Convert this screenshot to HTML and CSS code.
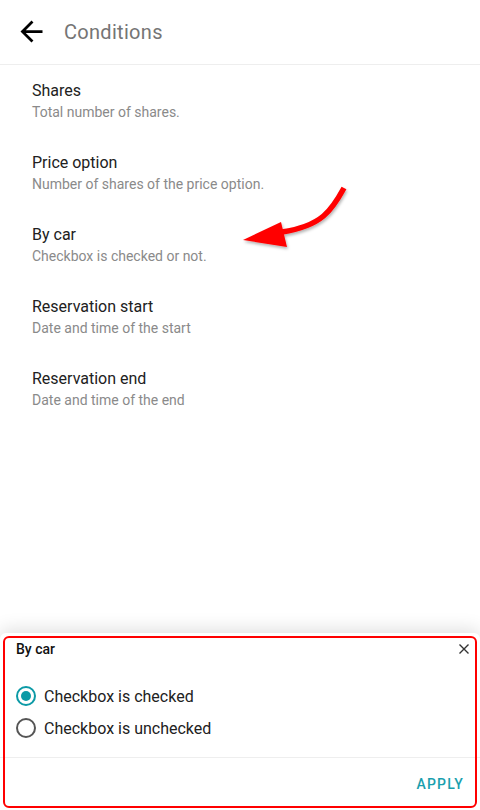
FILE: index.html
```html
<!DOCTYPE html>
<html>
<head>
<meta charset="utf-8">
<link rel="stylesheet" href="styles.css">
</head>
<body>
<div class="page">
  <header class="topbar">
    <svg class="back" width="33" height="33" viewBox="0 0 24 24"><path d="M20 11H7.83l5.59-5.59L12 4l-8 8 8 8 1.41-1.41L7.83 13H20v-2z" fill="#000"/></svg>
    <span class="title">Conditions</span>
  </header>
  <ul class="list">
    <li class="item"><div class="item-title">Shares</div><div class="item-sub">Total number of shares.</div></li>
    <li class="item"><div class="item-title">Price option</div><div class="item-sub">Number of shares of the price option.</div></li>
    <li class="item"><div class="item-title">By car</div><div class="item-sub">Checkbox is checked or not.</div></li>
    <li class="item"><div class="item-title">Reservation start</div><div class="item-sub">Date and time of the start</div></li>
    <li class="item"><div class="item-title">Reservation end</div><div class="item-sub">Date and time of the end</div></li>
  </ul>
  <svg class="arrow" width="130" height="80" viewBox="230 175 130 80">
    <defs>
      <filter id="sh" x="-20%" y="-20%" width="140%" height="140%">
        <feDropShadow dx="1" dy="2" stdDeviation="1.5" flood-color="#000" flood-opacity="0.3"/>
      </filter>
    </defs>
    <g filter="url(#sh)">
      <path d="M344 188 C 332 210, 322 226, 282 232" stroke="#ff0000" stroke-width="5.5" fill="none"/>
      <path d="M243 240 L 281 222 L 287 247 Z" fill="#ff0000"/>
    </g>
  </svg>
  <section class="sheet">
    <div class="sheet-head">
      <span class="sheet-title">By car</span>
      <svg class="close" width="12" height="12" viewBox="0 0 12 12"><path d="M1.5 1.5L10.5 10.5M10.5 1.5L1.5 10.5" stroke="#333" stroke-width="1.4"/></svg>
    </div>
    <div class="options">
      <label class="opt"><span class="radio on"></span><span>Checkbox is checked</span></label>
      <label class="opt"><span class="radio"></span><span>Checkbox is unchecked</span></label>
    </div>
    <div class="sheet-foot"><span class="apply">APPLY</span></div>
    <div class="highlight"></div>
  </section>
</div>
</body>
</html>
```
FILE: styles.css
```css
* { box-sizing: border-box; }
html, body { margin: 0; padding: 0; }
body {
  width: 480px;
  height: 810px;
  background: #fff;
  font-family: Roboto, "Liberation Sans", sans-serif;
  overflow: hidden;
}
.page {
  position: relative;
  width: 480px;
  height: 810px;
  display: flex;
  flex-direction: column;
}
.topbar {
  height: 65px;
  display: flex;
  align-items: center;
  border-bottom: 1px solid #eeeeee;
  padding-left: 15px;
}
.back { display: block; margin-top: -1px; }
.title {
  margin-left: 16px;
  font-size: 20px;
  letter-spacing: 0.3px;
  color: #757575;
}
.list {
  list-style: none;
  margin: 0;
  padding: 0;
  padding-top: 14px;
}
.item {
  height: 72px;
  padding-left: 32px;
}
.item-title {
  font-size: 16px;
  line-height: 24px;
  color: #212121;
}
.item-sub {
  font-size: 14px;
  line-height: 18px;
  color: #8a8a8a;
}
.arrow {
  position: absolute;
  left: 230px;
  top: 175px;
}
.sheet {
  position: absolute;
  left: 0;
  right: 0;
  bottom: 0;
  height: 177px;
  background: #fff;
  border-radius: 6px 6px 0 0;
  box-shadow: 0 -4px 18px rgba(0,0,0,0.12);
  display: flex;
  flex-direction: column;
}
.sheet-head {
  display: flex;
  justify-content: space-between;
  align-items: center;
  padding: 8px 10px 0 16px;
  height: 24px;
}
.sheet-title {
  font-size: 14px;
  font-weight: 500;
  color: #111;
}
.options {
  padding: 23px 0 0 16px;
  display: flex;
  flex-direction: column;
}
.opt {
  display: flex;
  align-items: center;
  height: 32px;
  font-size: 16px;
  color: #212121;
}
.radio {
  width: 20px;
  height: 20px;
  border: 2px solid #555;
  border-radius: 50%;
  margin-right: 8px;
  position: relative;
  flex: none;
}
.radio.on { border-color: #0c9aa6; }
.radio.on::after {
  content: "";
  position: absolute;
  left: 3px; top: 3px;
  width: 10px; height: 10px;
  border-radius: 50%;
  background: #0c9aa6;
}
.sheet-foot {
  margin-top: 13px;
  border-top: 1px solid #eeeeee;
  flex: 1;
  display: flex;
  justify-content: flex-end;
  align-items: center;
  padding-right: 16px;
}
.apply {
  font-size: 14px;
  font-weight: 500;
  letter-spacing: 1.2px;
  color: #1a9fae;
}
.highlight {
  position: absolute;
  left: 3px;
  right: 3px;
  top: 3px;
  bottom: 2px;
  border: 2px solid #ff0000;
  border-radius: 6px;
  pointer-events: none;
}
```
